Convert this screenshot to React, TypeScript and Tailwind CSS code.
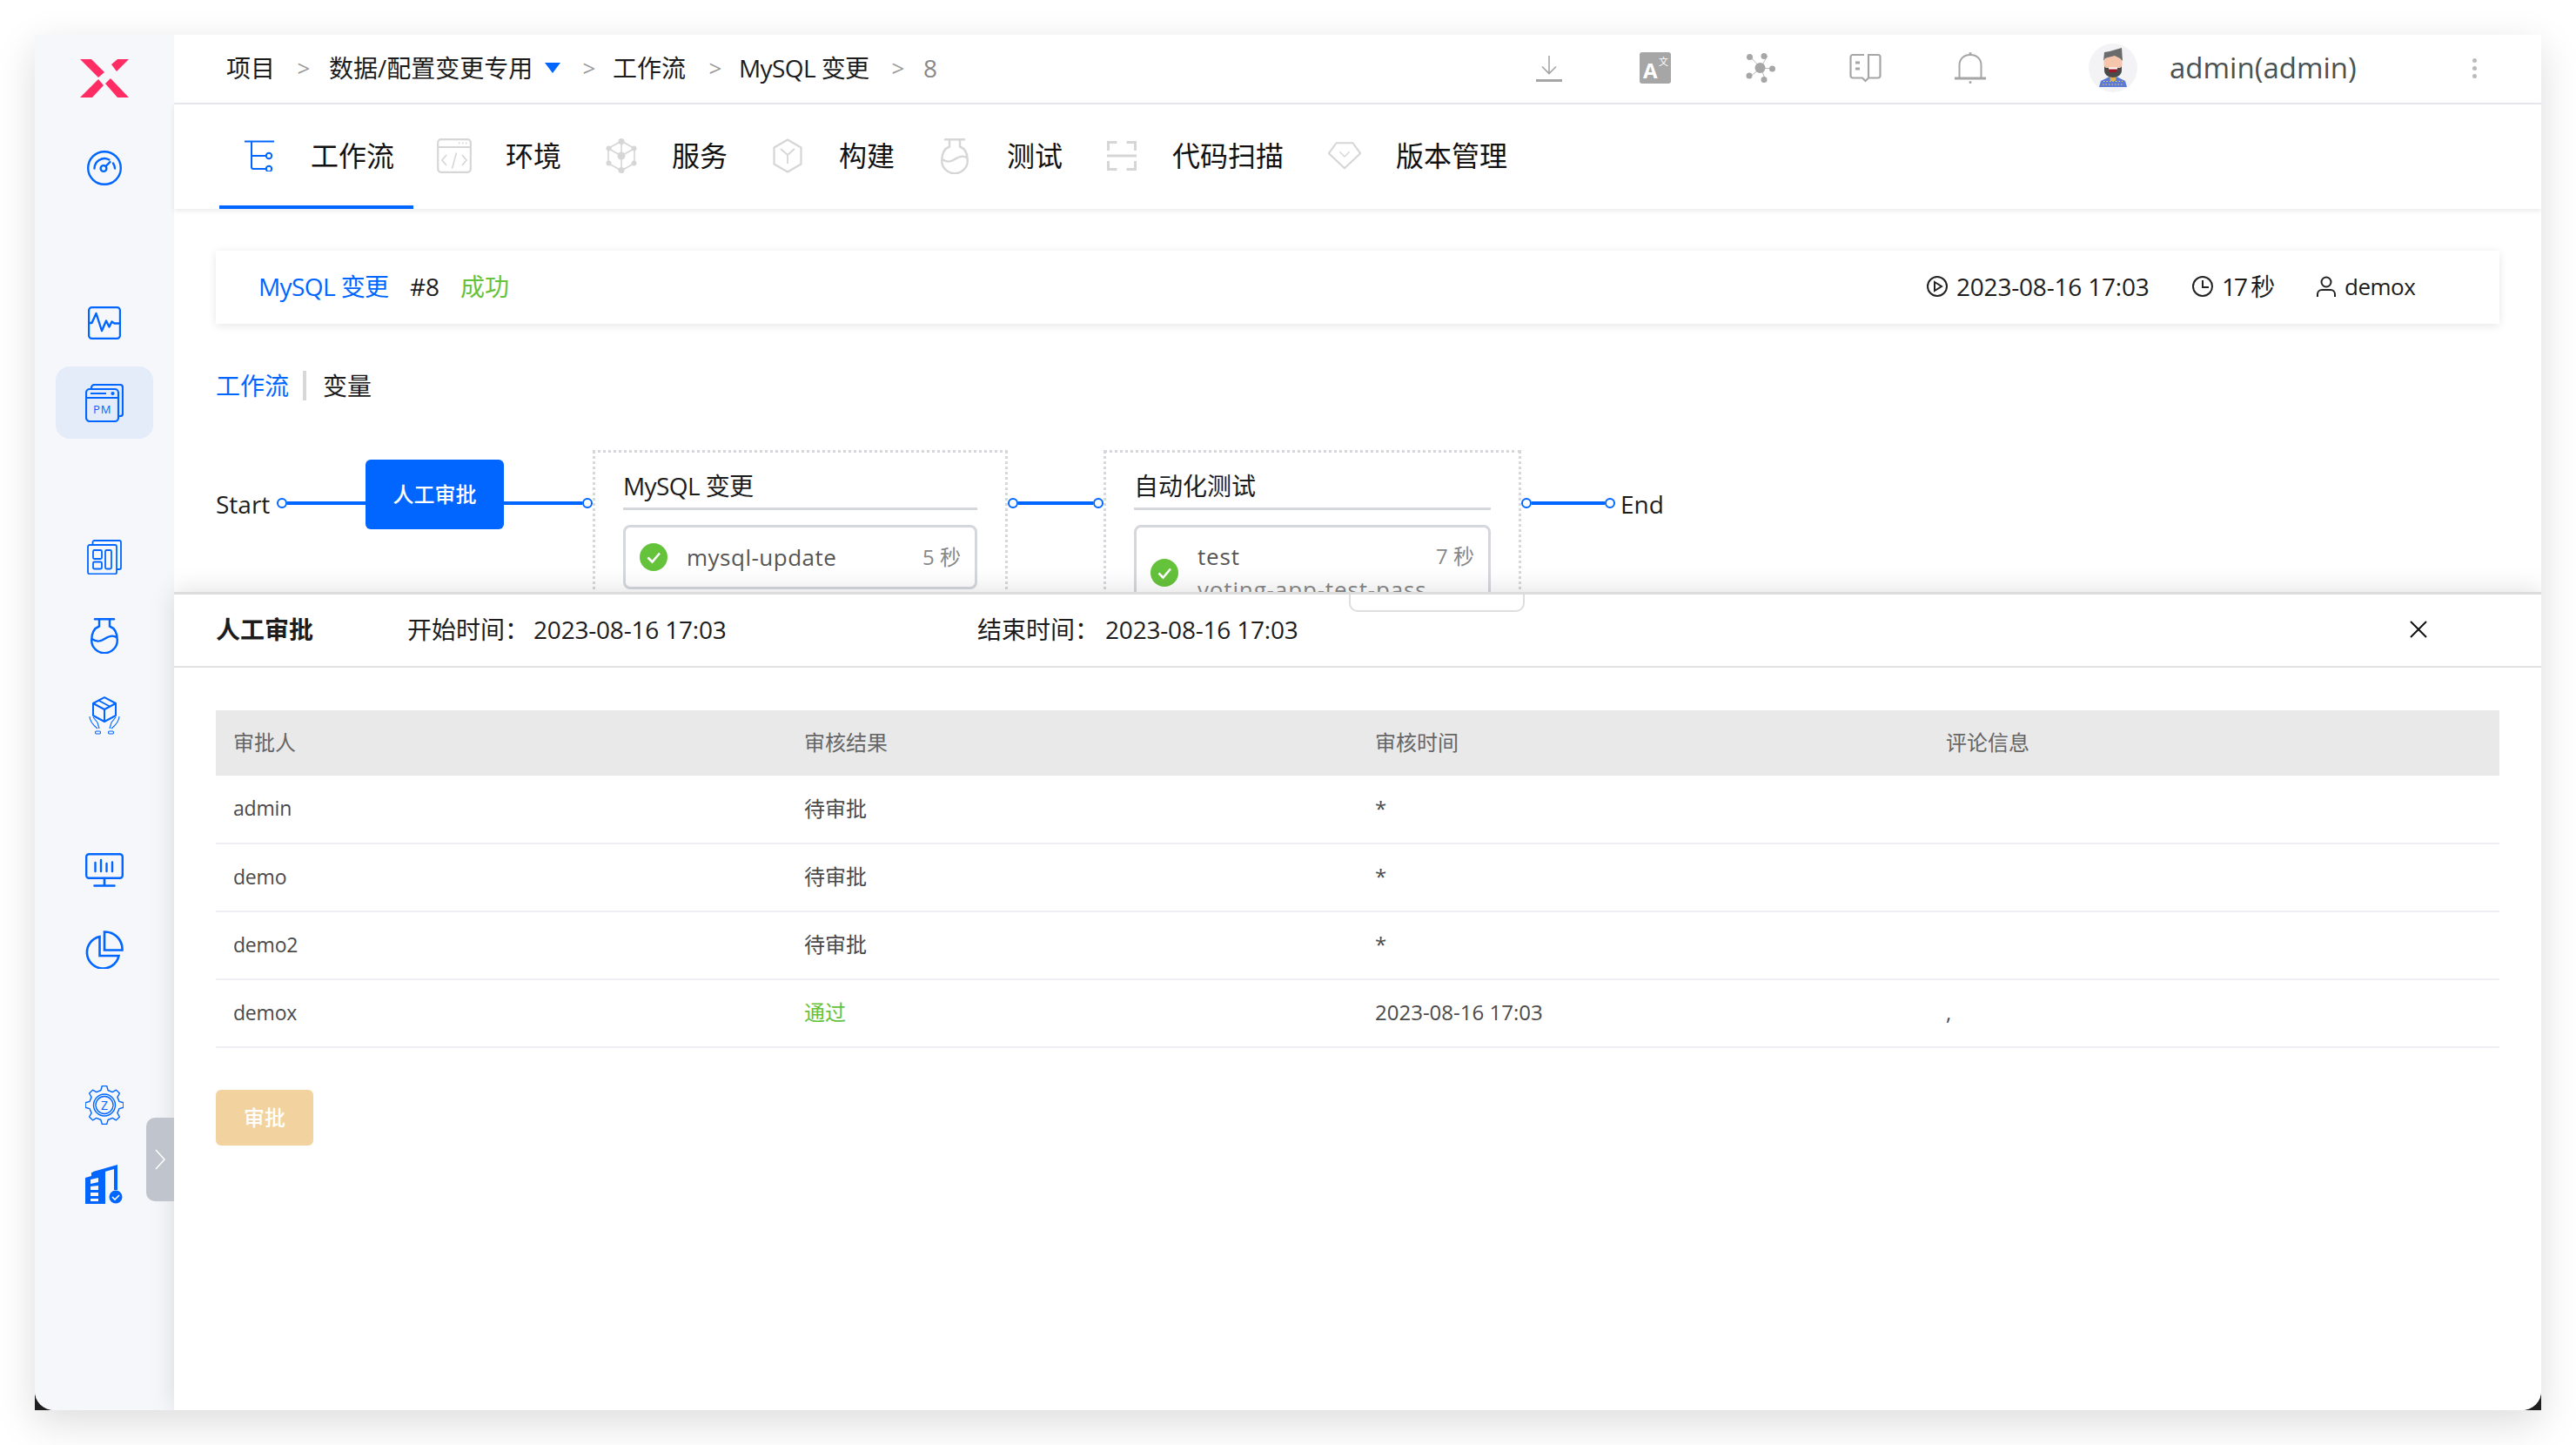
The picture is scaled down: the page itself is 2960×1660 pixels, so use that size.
import React from "react";

const B = "#0066ff";
const G = "#d6d6d6";
const T = "#a6a6a6";

function Logo() {
  return (
    <svg width="56" height="44" viewBox="0 0 56 44" fill="#ff2d63">
      <path d="M0 0h13l15 15-7 6z" />
      <path d="M36 6l7-6h13L42 14z" />
      <path d="M0 44l21-21 6 7-13 14z" />
      <path d="M29 28l6-6 21 22H43z" />
    </svg>
  );
}
function Gauge() {
  return (
    <svg width="40" height="40" viewBox="0 0 40 40" fill="none" stroke={B} strokeWidth="2.4" strokeLinecap="round">
      <circle cx="20" cy="20" r="18.8" />
      <path d="M8.5 20.5a11.5 11.5 0 0 1 17-10" />
      <path d="M30 14.5a12 12 0 0 1 2 6" />
      <circle cx="19" cy="20.5" r="3.4" />
      <path d="M21.5 18l5-5" />
    </svg>
  );
}
function Wave() {
  return (
    <svg width="38" height="38" viewBox="0 0 38 38" fill="none" stroke={B} strokeWidth="2.2" strokeLinejoin="round">
      <rect x="1.1" y="1.1" width="35.8" height="35.8" rx="3.5" />
      <path d="M1 19l3.5 0 5-11 6.500 20 5-11.500 3.500 7 3-6 3 2h7" strokeWidth="2.4" />
    </svg>
  );
}
function PM() {
  return (
    <svg width="44" height="44" viewBox="0 0 44 44" fill="none" stroke={B} strokeWidth="2.2">
      <path d="M7 6V4.500A3.500 3.500 0 0 1 10.500 1H40a3 3 0 0 1 3 3v30a3 3 0 0 1-3 3h-2" />
      <rect x="1" y="6" width="37" height="37" rx="4" />
      <path d="M1 16h37" />
      <path d="M6 11h18" strokeWidth="2" />
      <circle cx="31.500" cy="11" r="1" fill={B} />
      <text x="9" y="34" fontSize="13" fill={B} stroke="none" letterSpacing="1" fontFamily="Open Sans, sans-serif">PM</text>
    </svg>
  );
}
function Board() {
  return (
    <svg width="40" height="40" viewBox="0 0 40 40" fill="none" stroke={B} strokeWidth="1.8">
      <path d="M6.500 6V3a2 2 0 0 1 2-2H37a2 2 0 0 1 2 2v29a2 2 0 0 1-2 2h-3" />
      <rect x="1" y="6" width="33" height="33.500" rx="2" />
      <rect x="7" y="12" width="10" height="10" rx="1.500" />
      <rect x="7" y="25.500" width="10" height="8" rx="1.500" />
      <rect x="21" y="12" width="7" height="21.500" rx="1.500" />
    </svg>
  );
}
function Flask({ c = B, w = 32, h = 41 }: { c?: string; w?: number; h?: number }) {
  return (
    <svg width={w} height={h} viewBox="0 0 32 41" fill="none" stroke={c} strokeWidth="2.4">
      <path d="M5 1.300h22" strokeLinecap="round" />
      <path d="M10 2v7.500C4.500 11.500 1.200 16 1.200 25.500a14.800 14.800 0 0 0 29.600 0C30.800 16 27.500 11.500 22 9.500V2" />
      <path d="M1.500 24c6 4 10 3 14.500 0s10-5 14.500-1.500" />
    </svg>
  );
}
function Pack() {
  return (
    <svg width="36" height="44" viewBox="0 0 36 44" fill="none" stroke={B} strokeWidth="2">
      <path d="M18 1.200L31 8v14l-13 7-13-7V8z" strokeLinejoin="round" />
      <path d="M5 8l13 7 13-7M18 15v14" strokeLinejoin="round" />
      <path d="M11 4.500l13 7" strokeWidth="1.800" />
      <path d="M1 23c0 5 3 9 9 14M5 24l5 6 2 7" strokeWidth="1.100" />
      <path d="M35 23c0 5-3 9-9 14M31 24l-5 6-2 7" strokeWidth="1.100" />
      <rect x="7.500" y="40" width="6" height="3" rx="1.200" strokeWidth="1.100" />
      <rect x="22.500" y="40" width="6" height="3" rx="1.200" strokeWidth="1.100" />
    </svg>
  );
}
function Monitor() {
  return (
    <svg width="44" height="39" viewBox="0 0 44 39" fill="none" stroke={B} strokeWidth="2.4" strokeLinecap="round">
      <rect x="1.200" y="1.200" width="41.600" height="27.600" rx="3" />
      <path d="M11.500 11v10M18 8v13M24.500 12v9M31 10.500v10.500" />
      <path d="M22 29v8M10.500 37.500h23" strokeWidth="2.600" />
    </svg>
  );
}
function Pie() {
  return (
    <svg width="44" height="44" viewBox="0 0 44 44" fill="none" stroke={B} strokeWidth="2.600">
      <path d="M22 1.500a20 20 0 0 1 20.500 21H22z" />
      <path d="M16.500 7A18.500 18.500 0 1 0 38.500 29H16.500z" />
    </svg>
  );
}
function gearPath() {
  const n = 8;
  const cx = 22;
  const cy = 22.5;
  const ro = 22;
  const ri = 17.5;
  const pts: string[] = [];
  for (let i = 0; i < n; i++) {
    const a = (i * 2 * Math.PI) / n - Math.PI / 2;
    const step = (2 * Math.PI) / n;
    const seq: [number, number][] = [
      [ri, a - step * 0.3],
      [ro, a - step * 0.16],
      [ro, a + step * 0.16],
      [ri, a + step * 0.3],
    ];
    for (const [r, t] of seq) {
      pts.push(`${(cx + r * Math.cos(t)).toFixed(2)} ${(cy + r * Math.sin(t)).toFixed(2)}`);
    }
  }
  return `M${pts.join("L")}Z`;
}
function Gear() {
  return (
    <svg width="44" height="45" viewBox="0 0 44 45" fill="none" stroke={B} strokeWidth="1.400" strokeLinejoin="round">
      <path d={gearPath()} />
      <circle cx="22" cy="22.500" r="12.500" />
      <circle cx="22" cy="22.500" r="10" />
      <text x="22" y="27.500" fontSize="14" textAnchor="middle" fill={B} stroke="none" fontFamily="Open Sans, sans-serif">Z</text>
    </svg>
  );
}
function Building() {
  return (
    <svg width="44" height="45" viewBox="0 0 44 45" fill={B}>
      <path d="M0 45V15l7-2V9l16-4v40z" />
      <path d="M9 8L37 0v29h-4V5L9 12z" />
      <path d="M6 17l9-2v5l-9 2zM6 25l9-1v5H6zM6 32h9v4H6zM6 39h9v3H6z" fill="#f5f7fb" />
      <circle cx="35" cy="37" r="7.500" />
      <path d="M31 37l3 3 5-5" stroke="#fff" strokeWidth="1.600" fill="none" />
    </svg>
  );
}

function TreeI() {
  return (
    <svg width="36" height="36" viewBox="0 0 36 36" fill="none" stroke={B} strokeWidth="2">
      <path d="M1 1.500h34" />
      <path d="M9 1.500V31a2 2 0 0 0 2 2h15" />
      <path d="M9 18h17" />
      <circle cx="29" cy="18" r="3.200" />
      <circle cx="29" cy="33" r="3.200" />
    </svg>
  );
}
function EnvI() {
  return (
    <svg width="40" height="40" viewBox="0 0 40 40" fill="none" stroke={G} strokeWidth="2.200">
      <rect x="1.200" y="1.200" width="37.600" height="37.600" rx="3.500" />
      <path d="M1 10h38" />
      <path d="M25 5.500h1.500M29 5.500h1.500M33 5.500h1.500" />
      <path d="M11 19l-5 6 5 6M29 19l5 6-5 6M22.500 16.500l-5 18" strokeWidth="1.600" />
    </svg>
  );
}
function SvcI() {
  return (
    <svg width="36" height="40" viewBox="0 0 36 40" fill="none" stroke={G} strokeWidth="1.600">
      <path d="M18 3L33 11.500v17L18 37 3 28.500v-17z" />
      <path d="M18 3v34M3 11.500L18 20l15-8.500" />
      <g fill={G} stroke="none">
        <circle cx="18" cy="3.500" r="3.500" />
        <circle cx="3.500" cy="11.500" r="3" />
        <circle cx="32.500" cy="11.500" r="3" />
        <circle cx="3.500" cy="28.500" r="3" />
        <circle cx="32.500" cy="28.500" r="3" />
        <circle cx="18" cy="36.500" r="3.500" />
        <circle cx="18" cy="20" r="4.500" />
      </g>
    </svg>
  );
}
function BuildI() {
  return (
    <svg width="34" height="40" viewBox="0 0 34 40" fill="none" stroke={G} strokeWidth="2.200">
      <path d="M17 1.500L32.500 10.500v19L17 38.500 1.500 29.500v-19z" strokeLinejoin="round" />
      <path d="M9 12l8 7 8-7M17 19v10" strokeWidth="1.800" />
    </svg>
  );
}
function ScanI() {
  return (
    <svg width="34" height="34" viewBox="0 0 34 34" fill="none" stroke={G} strokeWidth="3">
      <path d="M1.500 11V1.500h10M22.500 1.500h10V11M1.500 23v9.500h10M22.500 32.500h10V23" />
      <path d="M0 17h34" />
    </svg>
  );
}
function VerI() {
  return (
    <svg width="42" height="34" viewBox="0 0 42 34" fill="none" stroke={G} strokeWidth="2.200">
      <path d="M11 1.500h20L40 14 21 32 2 14z" strokeLinejoin="round" />
      <path d="M15 12l6 6 6-6" strokeWidth="1.400" />
    </svg>
  );
}

function DownI() {
  return (
    <svg width="30" height="30" viewBox="0 0 30 30" fill="none" stroke={T} className="mt-[2px]">
      <path d="M15 0v20M7 12.500l8 8 8-8" strokeWidth="1.600" />
      <path d="M0 28.500h30" strokeWidth="3" />
    </svg>
  );
}
function LangI() {
  return (
    <div className="w-[36px] h-[36px] bg-[#a6a6a6] rounded-[3px] relative text-white font-bold leading-none">
      <span className="absolute left-[4px] bottom-[3px] text-[24px]">A</span>
      <span className="absolute right-[3px] top-[5px] text-[11px] font-normal">文</span>
    </div>
  );
}
function NetI() {
  return (
    <svg width="34" height="34" viewBox="0 0 34 34" fill={T} stroke={T}>
      <path d="M6 5l11 12M25 3l-8 14M17 17l15 1M17 17l-13 11M17 17l6 14" strokeWidth="0.800" fill="none" />
      <g stroke="none">
        <circle cx="16.500" cy="17" r="6" />
        <circle cx="4.500" cy="4.500" r="3.500" />
        <circle cx="21" cy="3.500" r="3.500" />
        <circle cx="30.500" cy="18" r="3.500" />
        <circle cx="4" cy="26" r="3.500" />
        <circle cx="21" cy="30.500" r="3.500" />
      </g>
    </svg>
  );
}
function BookI() {
  return (
    <svg width="37" height="34" viewBox="0 0 37 34" fill="none" stroke={T} strokeWidth="2.200">
      <path d="M17 2H4a2.500 2.500 0 0 0-2.500 2.500V26A2.500 2.500 0 0 0 4 28.500h11l3.500 3.500 3.500-3.500h11a2.500 2.500 0 0 0 2.500-2.500V4.500A2.500 2.500 0 0 0 33 2H22v26" />
      <path d="M7 11h5M7 18h5" strokeWidth="3" />
    </svg>
  );
}
function BellI() {
  return (
    <svg width="36" height="36" viewBox="0 0 36 36" fill="none" stroke={T} strokeWidth="2">
      <path d="M5.500 29.500V15C5.500 7.500 10.500 3 18 3s12.500 4.500 12.500 12v14.500" />
      <path d="M0 30h36" strokeWidth="3" />
      <path d="M16.500 1.500h3" strokeWidth="2.500" />
      <circle cx="18" cy="34.500" r="1.500" fill={T} stroke="none" />
    </svg>
  );
}
function Avatar() {
  return (
    <svg width="56" height="56" viewBox="0 0 56 56">
      <circle cx="28" cy="28" r="28" fill="#f3f3f5" />
      <path d="M12 50l2-7 10-5h8l10 5 2 7z" fill="#5c7bd9" />
      <path d="M24 37h8l-1 6h-6z" fill="#e0b14f" />
      <path d="M16 47h24M17 43.500h22" stroke="#f2d04a" strokeWidth="1" strokeDasharray="1.500 2" />
      <ellipse cx="28" cy="23" rx="10.500" ry="12" fill="#f5c5ac" />
      <path d="M17 20l1-10 6-1 14-4 1 15-3-3-6-3-8 2-3 1z" fill="#6b6b6b" />
      <path d="M18 26c1 2 2 2 3 2h14c1 0 2 0 3-2v5c0 5-5 8-10 8s-10-3-10-8z" fill="#4a4a4a" />
      <path d="M23 28h10l-1 5h-8z" fill="#a01822" />
      <path d="M23 27.500h10v2H23z" fill="#fff" />
    </svg>
  );
}
function CheckC({ size = 32 }: { size?: number }) {
  return (
    <svg width={size} height={size} viewBox="0 0 32 32" className="shrink-0">
      <circle cx="16" cy="16" r="16" fill="#65c23b" />
      <path d="M9.500 16.500l5 5 8.500-10" fill="none" stroke="#fff" strokeWidth="2.600" />
    </svg>
  );
}

function Connector({ w, left = true, right = true }: { w: number; left?: boolean; right?: boolean }) {
  const dot = <span className="w-[12px] h-[12px] rounded-full border-2 border-[#0066ff] bg-white shrink-0" />;
  return (
    <div className="flex items-center shrink-0 h-[12px] mt-[55px]" style={{ width: w }}>
      {left && dot}
      <span className="h-[4px] flex-1 bg-[#0066ff]" />
      {right && dot}
    </div>
  );
}

const tabs: [React.ReactNode, string, string, string][] = [
  [<TreeI />, "工作流", "pl-[26px] pr-[22px] border-[#0066ff]", "mr-[39px]"],
  [<EnvI />, "环境", "pl-[27px] pr-[24px] border-transparent", "mr-[39px]"],
  [<SvcI />, "服务", "pl-[25px] pr-[24px] border-transparent", "mr-[38px]"],
  [<BuildI />, "构建", "pl-[25px] pr-[24px] border-transparent", "mr-[39px]"],
  [<Flask c={G} />, "测试", "pl-[25px] pr-[24px] border-transparent", "mr-[40px]"],
  [<ScanI />, "代码扫描", "pl-[24px] pr-[25px] border-transparent", "mr-[38px]"],
  [<VerI />, "版本管理", "pl-[25px] pr-[26px] border-transparent", "mr-[39px]"],
];

const rows = [
  ["admin", "待审批", "*", ""],
  ["demo", "待审批", "*", ""],
  ["demo2", "待审批", "*", ""],
  ["demox", "通过", "2023-08-16 17:03", ","],
];

function Crumb({ children }: { children: React.ReactNode }) {
  return <span className="text-[#999] text-[26px] w-[16px] text-center shrink-0 leading-none">{children}</span>;
}

export default function App() {
  return (
    <div className="w-[2960px] h-[1660px] bg-white p-[40px] overflow-hidden font-['Open_Sans','Noto_Sans_CJK_SC',sans-serif] text-[#1c1c1c]">
      <div className="relative w-[2880px] h-[1580px] bg-[#1f1f1f] shadow-[0_14px_44px_rgba(0,0,0,0.14)]">
        <div className="flex w-full h-full bg-white rounded-b-[22px] overflow-hidden">
          <aside className="w-[160px] shrink-0 bg-[#f5f7fb] flex flex-col items-center pt-[28px]">
            <Logo />
            <div className="mt-[61px]"><Gauge /></div>
            <div className="mt-[139px]"><Wave /></div>
            <div className="mt-[31px] w-[112px] h-[83px] rounded-[16px] bg-[#e4ecfa] flex items-center justify-center"><PM /></div>
            <div className="mt-[116px]"><Board /></div>
            <div className="mt-[50px]"><Flask /></div>
            <div className="mt-[49px]"><Pack /></div>
            <div className="mt-[136px]"><Monitor /></div>
            <div className="mt-[50px]"><Pie /></div>
            <div className="mt-[134px]"><Gear /></div>
            <div className="mt-[46px]"><Building /></div>
          </aside>

          <main className="relative z-10 flex-1 flex flex-col min-w-0">
            <header className="h-[80px] shrink-0 flex items-center border-b-2 border-[#e8e9ee] pl-[60px] pb-[2px] text-[28px]">
              <span>项目</span>
              <span className="w-[25px]" />
              <Crumb>&gt;</Crumb>
              <span className="w-[21px]" />
              <span className="w-[235px] whitespace-nowrap">数据/配置变更专用</span>
              <span className="ml-[13px] w-0 h-0 border-x-[9px] border-x-transparent border-t-[12px] border-t-[#0066ff]" />
              <span className="w-[25px]" />
              <Crumb>&gt;</Crumb>
              <span className="w-[19px]" />
              <span>工作流</span>
              <span className="w-[26px]" />
              <Crumb>&gt;</Crumb>
              <span className="w-[19px]" />
              <span className="w-[150px] whitespace-nowrap tracking-[-0.6px]">MySQL 变更</span>
              <span className="w-[25px]" />
              <Crumb>&gt;</Crumb>
              <span className="w-[21px]" />
              <span className="w-[15px] text-[#888]">8</span>
              <div className="ml-auto flex items-center">
                <DownI />
                <div className="ml-[89px]"><LangI /></div>
                <div className="ml-[86px]"><NetI /></div>
                <div className="ml-[85px]"><BookI /></div>
                <div className="ml-[84px]"><BellI /></div>
                <div className="ml-[118px]"><Avatar /></div>
                <span className="ml-[37px] w-[217px] text-[33px] text-[#4a5252] whitespace-nowrap">admin(admin)</span>
                <span className="ml-[131px] mr-[74px] flex flex-col gap-[4px]">
                  <i className="w-[5px] h-[5px] rounded-full bg-[#bbb] block" />
                  <i className="w-[5px] h-[5px] rounded-full bg-[#bbb] block" />
                  <i className="w-[5px] h-[5px] rounded-full bg-[#bbb] block" />
                </span>
              </div>
            </header>

            <nav className="h-[120px] shrink-0 flex items-stretch pl-[52px] shadow-[0_2px_6px_rgba(0,0,0,0.09)] relative z-[1] text-[32px] text-[#111]">
              {tabs.map(([icon, label, cls, gap], i) => (
                <div key={i} className={`flex items-center pt-[2px] border-b-4 ${cls}`}>
                  <span className={`w-[40px] flex justify-center ${gap}`}>{icon}</span>
                  <span className="whitespace-nowrap">{label}</span>
                </div>
              ))}
            </nav>

            <section className="h-[440px] shrink-0 px-[48px] pt-[48px] overflow-hidden">
              <div className="h-[84px] flex items-center pl-[49px] pr-[96px] pb-[2px] bg-white shadow-[0_2px_10px_rgba(0,0,0,0.1)] text-[28px]">
                <span className="w-[150px] whitespace-nowrap tracking-[-0.6px] text-[#0066ff]">MySQL 变更</span>
                <span className="ml-[24px] w-[34px]">#8</span>
                <span className="ml-[24px] text-[#65c23b]">成功</span>
                <div className="ml-auto flex items-center">
                  <svg width="24" height="24" viewBox="0 0 24 24" fill="none" stroke="#222" strokeWidth="2"><circle cx="12" cy="12" r="11" /><path d="M9 7l8 5-8 5z" /></svg>
                  <span className="ml-[10px] w-[222px] whitespace-nowrap tracking-[-0.2px]">2023-08-16 17:03</span>
                  <svg className="ml-[49px]" width="24" height="24" viewBox="0 0 24 24" fill="none" stroke="#222" strokeWidth="2"><circle cx="12" cy="12" r="11" /><path d="M12 5v8h7" /></svg>
                  <span className="ml-[10px] w-[57px] whitespace-nowrap tracking-[-2px]">17 秒</span>
                  <svg className="ml-[52px]" width="22" height="24" viewBox="0 0 22 24" fill="none" stroke="#222" strokeWidth="2"><circle cx="11" cy="7" r="5.500" /><path d="M1 24v-3a5 5 0 0 1 5-5h10a5 5 0 0 1 5 5v3" /></svg>
                  <span className="ml-[10px] w-[82px] whitespace-nowrap text-[26px] tracking-[-0.5px]">demox</span>
                </div>
              </div>

              <div className="mt-[54px] h-[34px] flex items-center text-[28px]">
                <span className="text-[#0066ff]">工作流</span>
                <span className="ml-[16px] w-[4px] h-[34px] bg-[#d8d8d8]" />
                <span className="ml-[19px]">变量</span>
              </div>

              <div className="mt-[57px] flex items-start text-[28px]">
                <span className="w-[70px] shrink-0 mt-[42px] leading-[40px]">Start</span>
                <Connector w={102} right={false} />
                <div className="w-[159px] h-[80px] mt-[11px] shrink-0 rounded-[6px] bg-[#0066ff] text-white text-[24px] font-medium flex items-center justify-center">人工审批</div>
                <Connector w={102} left={false} />
                <div className="w-[477px] h-[300px] shrink-0 border-[3px] border-dotted border-[#d4d7dc] pt-[18px] px-[32px]">
                  <div className="h-[48px] leading-[40px] border-b-[3px] border-[#d4d7dc] tracking-[-0.6px]">MySQL 变更</div>
                  <div className="mt-[17px] h-[74px] border-[3px] border-[#d4d7dc] rounded-[8px] flex items-center pl-[16px] pr-[16px] text-[26px] text-[#555]">
                    <CheckC />
                    <span className="ml-[22px] tracking-[0.5px]">mysql-update</span>
                    <span className="ml-auto text-[#888] text-[24px]">5 秒</span>
                  </div>
                </div>
                <Connector w={110} />
                <div className="w-[480px] h-[300px] shrink-0 border-[3px] border-dotted border-[#d4d7dc] pt-[18px] px-[32px]">
                  <div className="h-[48px] leading-[40px] border-b-[3px] border-[#d4d7dc]">自动化测试</div>
                  <div className="mt-[17px] h-[110px] border-[3px] border-[#d4d7dc] rounded-[8px] flex items-center pl-[16px] pr-[16px] text-[26px] text-[#555]">
                    <CheckC />
                    <div className="ml-[22px] flex-1 leading-[38px]">
                      <div className="flex justify-between">
                        <span className="tracking-[0.8px]">test</span>
                        <span className="text-[#888] text-[24px]">7 秒</span>
                      </div>
                      <div className="text-[#888] tracking-[0.85px]">voting-app-test-pass</div>
                    </div>
                  </div>
                </div>
                <Connector w={108} />
                <span className="ml-[6px] mt-[42px] leading-[40px]">End</span>
              </div>
            </section>

            <section className="relative flex-1 bg-white border-t-[3px] border-[#dcdcdc] shadow-[0_-2px_28px_rgba(0,0,0,0.12)] flex flex-col">
              <span className="absolute left-[1350px] top-[0px] w-[202px] h-[20px] bg-white border-2 border-[#dedede] rounded-b-[10px] border-t-0" />
              <div className="h-[84px] shrink-0 border-b-2 border-[#e2e2e2] flex items-center pl-[48px] pb-[2px] text-[28px]">
                <span className="font-semibold w-[112px]">人工审批</span>
                <span className="ml-[108px]">开始时间：</span>
                <span className="ml-[5px] w-[222px] whitespace-nowrap tracking-[-0.2px]">2023-08-16 17:03</span>
                <span className="ml-[288px]">结束时间：</span>
                <span className="ml-[7px] w-[222px] whitespace-nowrap tracking-[-0.2px]">2023-08-16 17:03</span>
                <svg className="ml-auto mr-[131px]" width="20" height="20" viewBox="0 0 20 20" stroke="#111" strokeWidth="2"><path d="M1 1l18 18M19 1L1 19" /></svg>
              </div>
              <div className="mx-[48px] mt-[49px]">
                <table className="w-full table-fixed text-[24px]">
                  <thead>
                    <tr className="h-[75px] bg-[#e9e9ea] text-[#666]">
                      {["审批人", "审核结果", "审核时间", "评论信息"].map((h) => (
                        <th key={h} className="text-left font-normal pl-[20px] pb-[2px]">{h}</th>
                      ))}
                    </tr>
                  </thead>
                  <tbody>
                    {rows.map((r) => (
                      <tr key={r[0]} className="h-[78px] border-b-2 border-[#eef0f6] text-[#4a4a4a]">
                        {r.map((c, i) => (
                          <td key={i} className={`pl-[20px] pb-[2px] ${i === 0 ? "text-[23px] tracking-[-0.2px]" : ""} ${c === "通过" ? "text-[#65c23b]" : ""}`}>{c}</td>
                        ))}
                      </tr>
                    ))}
                  </tbody>
                </table>
                <button className="block mt-[48px] w-[112px] h-[64px] rounded-[6px] bg-[#f2d29e] text-white text-[24px] font-medium">审批</button>
              </div>
            </section>
          </main>
        </div>
        <div className="absolute z-20 left-[128px] top-[1244px] w-[32px] h-[96px] bg-[#c0c4cc] rounded-l-[10px] flex items-center justify-center">
          <svg width="12" height="24" viewBox="0 0 12 24" fill="none" stroke="#fff" strokeWidth="1.500"><path d="M1 1l10 11L1 23" /></svg>
        </div>
      </div>
    </div>
  );
}
